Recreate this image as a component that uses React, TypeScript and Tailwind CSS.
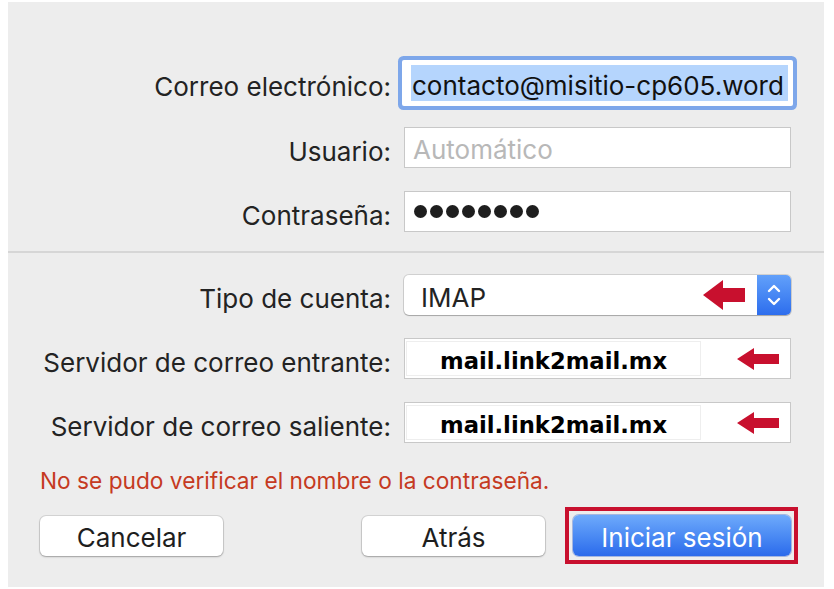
import React from 'react';

const font = { fontFamily: 'Inter, "Liberation Sans", sans-serif' };

const Arrow: React.FC<{ big?: boolean }> = ({ big }) =>
  big ? (
    <svg width="42" height="30" viewBox="0 0 42 30" className="shrink-0">
      <polygon points="0,15 20,0 20,8 42,8 42,22 20,22 20,30" fill="#c8102e" />
    </svg>
  ) : (
    <svg width="42" height="22" viewBox="0 0 42 22" className="shrink-0">
      <polygon points="0,11 17,0 17,6 42,6 42,16 17,16 17,22" fill="#c8102e" />
    </svg>
  );

const Label: React.FC<{ children: React.ReactNode }> = ({ children }) => (
  <div className="text-right text-[26px] text-[#232323] leading-none pt-[8px]">{children}</div>
);

const ServerField: React.FC<{ value: string }> = ({ value }) => (
  <div className="flex items-center h-[41px] w-[387px] bg-white border border-[#c8c8c8]">
    <div className="ml-[1px] w-[295px] h-[35px] border border-[#eeeeee] flex items-center pl-[33px] pt-[5px]">
      <span
        className="font-bold text-[22.7px] text-black leading-none"
        style={{ fontFamily: '"DejaVu Sans", sans-serif' }}
      >
        {value}
      </span>
    </div>
    <div className="ml-auto mr-[11px] flex items-center">
      <Arrow />
    </div>
  </div>
);

export default function App() {
  return (
    <div className="w-[834px] h-[589px] bg-white pt-[2px] pb-[2px] pl-[8px] pr-[10px]" style={font}>
      <div className="h-full bg-[#ededed] flex flex-col">
        {/* account fields */}
        <div className="grid grid-cols-[383px_387px] gap-x-[13px] items-center mt-[58px]">
          <Label>Correo electrónico:</Label>
          <div className="-ml-[2px] w-[391px] h-[46px] bg-white rounded-[2px] ring-4 ring-[#7ea7ea] flex items-center pl-[9px]">
            <span className="bg-[#b5d5fd] h-[36px] w-[377px] flex items-center pl-[1px] pt-[5px] text-[26px] text-[#111] leading-none whitespace-nowrap overflow-hidden">
              contacto@misitio-cp605.word
            </span>
          </div>
        </div>

        <div className="grid grid-cols-[383px_387px] gap-x-[13px] items-center mt-[21px]">
          <Label>Usuario:</Label>
          <div className="h-[41px] bg-white border border-[#c8c8c8] flex items-center pl-[8px] pt-[5px] text-[26px] text-[#b8b8b8] leading-none">
            Automático
          </div>
        </div>

        <div className="grid grid-cols-[383px_387px] gap-x-[13px] items-center mt-[23px]">
          <Label>Contraseña:</Label>
          <div className="h-[41px] bg-white border border-[#c8c8c8] flex items-center pl-[9px] gap-[3px]">
            {Array.from({ length: 8 }).map((_, i) => (
              <span key={i} className="w-[13px] h-[13px] rounded-full bg-[#1e1e1e]" />
            ))}
          </div>
        </div>

        <div className="mt-[19px] h-[2px] bg-[#d6d6d6]" />

        {/* server fields */}
        <div className="grid grid-cols-[383px_387px] gap-x-[13px] items-center mt-[22px]">
          <Label>Tipo de cuenta:</Label>
          <div className="h-[40px] bg-white rounded-[5px] shadow-[0_0_0_1px_rgba(0,0,0,0.12),0_1px_1px_rgba(0,0,0,0.2)] flex items-center">
            <span className="pl-[17px] pt-[5px] text-[26px] text-[#232323] leading-none">IMAP</span>
            <div className="ml-auto mr-[12px] flex items-center">
              <Arrow big />
            </div>
            <div className="w-[34px] h-full rounded-r-[5px] bg-gradient-to-b from-[#62a0fa] to-[#2d6ded] flex items-center justify-center">
              <svg width="16" height="26" viewBox="0 0 16 26" fill="none" stroke="white" strokeWidth="2.4" strokeLinecap="round" strokeLinejoin="round">
                <polyline points="3,9 8,4 13,9" />
                <polyline points="3,17 8,22 13,17" />
              </svg>
            </div>
          </div>
        </div>

        <div className="grid grid-cols-[383px_387px] gap-x-[13px] items-center mt-[23px]">
          <Label>Servidor de correo entrante:</Label>
          <ServerField value="mail.link2mail.mx" />
        </div>

        <div className="grid grid-cols-[383px_387px] gap-x-[13px] items-center mt-[23px]">
          <Label>Servidor de correo saliente:</Label>
          <ServerField value="mail.link2mail.mx" />
        </div>

        <div className="mt-[23px] h-[28px] flex items-center pl-[32px] pt-[3px] text-[22.7px] text-[#c53a22] leading-none">
          No se pudo verificar el nombre o la contraseña.
        </div>

        {/* buttons */}
        <div className="mt-[13px] flex items-center pl-[32px] h-[57px]">
          <button className="w-[183px] h-[40px] bg-white rounded-[6px] shadow-[0_0_0_1px_rgba(0,0,0,0.1),0_1px_2px_rgba(0,0,0,0.25)] pt-[4px] text-[26px] text-[#1e1e1e] leading-none">
            Cancelar
          </button>
          <button className="ml-[139px] w-[183px] h-[40px] bg-white rounded-[6px] shadow-[0_0_0_1px_rgba(0,0,0,0.1),0_1px_2px_rgba(0,0,0,0.25)] pt-[4px] text-[26px] text-[#1e1e1e] leading-none">
            Atrás
          </button>
          <div className="ml-[20px] w-[233px] h-[57px] border-4 border-[#c8102e] flex items-center pl-[4px]">
            <button className="w-[218px] h-[41px] rounded-[6px] bg-gradient-to-b from-[#6eaafb] to-[#2b6aeb] shadow-[0_0_0_1px_rgba(30,80,200,0.35)] pt-[4px] text-[26px] text-white leading-none">
              Iniciar sesión
            </button>
          </div>
        </div>
      </div>
    </div>
  );
}
